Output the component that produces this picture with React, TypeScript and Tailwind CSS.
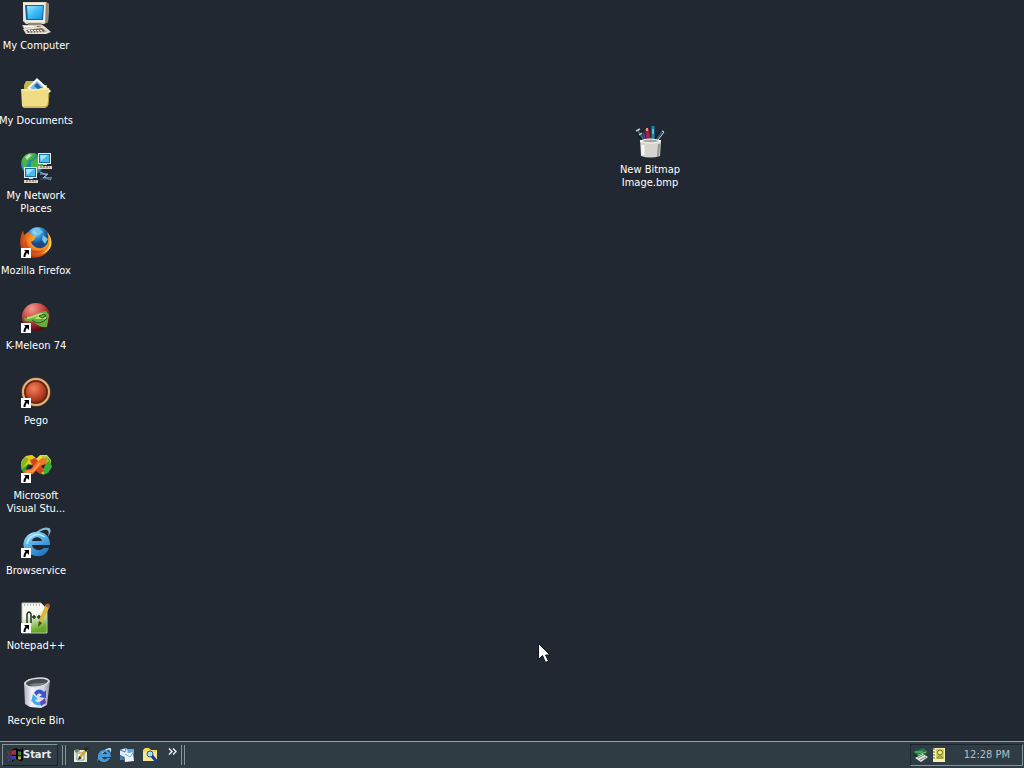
import React from "react";

type IconProps = { children: React.ReactNode; small?: boolean };

function Glyph({ children, small }: IconProps) {
  return (
    <svg
      aria-hidden="true"
      viewBox={small ? "0 0 16 16" : "0 0 32 32"}
      className={small ? "size-4 shrink-0" : "size-8 shrink-0"}
    >
      {children}
    </svg>
  );
}

function ShortcutArrow() {
  return (
    <g>
      <rect x="1" y="21" width="10" height="10" fill="#fff" />
      <path d="M4 23h5v5l-2-2c-1 1-1.500 2-1.500 4h-2c0-2.500.7-4 2-5.500z" fill="#000" />
    </g>
  );
}

function MyComputer() {
  return (
    <Glyph>
      <defs>
        <linearGradient id="screen" x2="1" y2="1">
          <stop stopColor="#9be8ff" />
          <stop offset=".5" stopColor="#3bbcf6" />
          <stop offset="1" stopColor="#1c8fe0" />
        </linearGradient>
      </defs>
      <path d="M3 0h23l3 2-1 18-4 2H6l-3-3z" fill="#ddd8c8" />
      <path d="M26 0l3 2-1 18-3 1z" fill="#8f8a7c" />
      <path d="M3 1h22v19H5z" fill="#f1eee4" />
      <path d="M5 3h19l-1 15H6z" fill="#1a5f9e" />
      <path d="M7 4h16l-1 13H8z" fill="url(#screen)" />
      <path d="M8 21h13l2 3H8z" fill="#8d8676" />
      <path d="M2 23h21l2 4H4z" fill="#d6d0c1" />
      <path d="M4 24h10v1H4z" fill="#fff" />
      <path d="M17 24h4v1h-4z" fill="#5d574c" />
      <path d="M3 27l21-3 7 6-5 2H6z" fill="#e6dfd0" />
      <path d="M6 28l16-2 5 4-19 1z" fill="#77695d" />
      <path d="M8 28.500h15M9 30h17" stroke="#f6f1e5" strokeDasharray="2 1" />
    </Glyph>
  );
}

function MyDocuments() {
  return (
    <Glyph>
      <path d="M4 8l2-4h8l3 4h10v8H4z" fill="#c3b545" />
      <path d="M7 11L17 1l14 13-6 6z" fill="#f8fbff" />
      <path d="M10 11l7-7 9 9-4 4z" fill="#78b9e5" />
      <path d="M14 9l3-3 5 5-4 1zM21 14l4-2 2 2-3 3z" fill="#28639b" />
      <path d="M1 12h18l2-1h8l-1 18-3 2H4l-2-2z" fill="#f1dc86" />
      <path d="M2 13h17l2-1h7" fill="none" stroke="#fff4ae" />
      <path d="M4 30h21l3-2 1-11" fill="none" stroke="#b79a38" />
    </Glyph>
  );
}

function MonitorShape({ x, y }: { x: number; y: number }) {
  return (
    <g transform={`translate(${x} ${y})`}>
      <path d="M0 0h13v11H0z" fill="#eeeade" />
      <path d="M1 1h11v9H1z" fill="#176eaa" />
      <path d="M2 2h9v7H2z" fill="#49b9ee" />
      <path d="M2 2h8L3 8z" fill="#a1e8ff" />
      <path d="M5 11h4v1H5zM0 13h14v3H0z" fill="#d8d3c5" />
      <path d="M2 14h10" stroke="#545b60" strokeDasharray="2 1" />
    </g>
  );
}

function NetworkPlaces() {
  return (
    <Glyph>
      <circle cx="12" cy="12" r="11" fill="#238ca5" />
      <path d="M2 8c3-7 9-8 14-6l-3 5-4 1-2 5-4 4zM11 10l8-6 4 9-8 7-4-4z" fill="#49b34a" />
      <path d="M5 5l4-3 3 1-5 5z" fill="#b8e7ad" />
      <MonitorShape x={18} y={1} />
      <MonitorShape x={4} y={15} />
      <path d="M20 22h8l-5 4h9M20 20l7 3-3 2 7 3" fill="none" stroke="#91b7dc" />
      <path d="M20 27h10" stroke="#315a83" />
    </Glyph>
  );
}

function Firefox() {
  return (
    <Glyph>
      <defs>
        <radialGradient id="fox" cx=".65" cy=".35" r=".7">
          <stop stopColor="#ffd24d" />
          <stop offset=".55" stopColor="#f28220" />
          <stop offset="1" stopColor="#b62f12" />
        </radialGradient>
        <radialGradient id="globe" cx=".4" cy=".2">
          <stop stopColor="#c9f4ff" />
          <stop offset=".5" stopColor="#3599da" />
          <stop offset="1" stopColor="#164883" />
        </radialGradient>
      </defs>
      <circle cx="18" cy="12" r="12" fill="url(#globe)" />
      <path d="M12 2l6-1 5 4-4 3-3-2zM23 8l5 4-3 5-3-4z" fill="#75c6e9" />
      <path d="M3 3l1 5 4-3 4 3 4 1-2 4-3 2c2 5 8 8 13 5 5-3 5-8 3-15 5 5 5 13 1 19-7 9-21 9-26 0C-1 17 0 9 3 3z" fill="url(#fox)" />
      <path d="M6 13c0 9 8 13 18 10-8 6-18 3-20-7z" fill="#d24a1b" />
      <path d="M28 6c4 9 1 17-7 21 10-2 14-11 7-21z" fill="#ffd04e" />
      <ShortcutArrow />
    </Glyph>
  );
}

function KMeleon() {
  return (
    <Glyph>
      <defs>
        <radialGradient id="meleon" cx=".35" cy=".2" r=".8">
          <stop stopColor="#f09a8d" />
          <stop offset=".5" stopColor="#c84642" />
          <stop offset="1" stopColor="#5a0710" />
        </radialGradient>
      </defs>
      <circle cx="16" cy="15" r="14" fill="url(#meleon)" />
      <path d="M4 16c7 1 12-6 22-7l3 4-2 12c-6 1-10-2-13-5l-9-1z" fill="#68ad3b" />
      <path d="M7 16c7 0 9-4 15-4l-5 4h9" fill="none" stroke="#b4de6c" strokeWidth="2" />
      <path d="M12 18c5 4 10 4 15-2M19 14l5-2 2 2-4 2z" fill="none" stroke="#1d5723" />
      <ShortcutArrow />
    </Glyph>
  );
}

function Pego() {
  return (
    <Glyph>
      <defs>
        <radialGradient id="pego" cx=".4" cy=".35" r=".7">
          <stop stopColor="#f28160" />
          <stop offset=".55" stopColor="#c4482a" />
          <stop offset="1" stopColor="#7c2613" />
        </radialGradient>
      </defs>
      <circle cx="16" cy="15" r="14.500" fill="#96562c" />
      <circle cx="16" cy="15" r="13" fill="none" stroke="#dcb67a" strokeWidth="2" />
      <circle cx="16" cy="15" r="11" fill="url(#pego)" stroke="#64220f" strokeWidth="1.500" />
      <ShortcutArrow />
    </Glyph>
  );
}

function VisualStudio() {
  return (
    <Glyph>
      <path d="M1 10l5-6 6-1 4 3-5 6-3 1-2 4 3 5H4l-3-5z" fill="#2aa33a" />
      <path d="M6 4l6-1 5 4-5 6-4-1-5 4-2-2 1-6z" fill="#ecc91f" />
      <path d="M1 11l4-6 4 2-4 6-3 5z" fill="#7fb829" />
      <path d="M16 7l4-4h7l4 5v7l-4-3-4-1-4 1z" fill="#f0d432" />
      <path d="M26 4l4 4 2 7-4 6-5 2-4-4 5-3 2-5z" fill="#3bae37" />
      <path d="M22 4l5 1 2 4-4 3z" fill="#92ca38" />
      <path d="M18 18l5-2 1 6-4-1z" fill="#e4cf2d" />
      <path d="M10 8l5-2 5 5 4 8-4 3-6-5z" fill="#d3441c" />
      <path d="M5 18l6-1 6-7 5-4 5 1-1 5-6 2-7 8-6 1-3-2z" fill="#f07428" />
      <path d="M7 20l6-1 7-8" fill="none" stroke="#f99c52" strokeWidth="1.500" />
      <ShortcutArrow />
    </Glyph>
  );
}

function Browservice() {
  return (
    <Glyph>
      <defs>
        <linearGradient id="ie" x2=".6" y2="1">
          <stop stopColor="#c5efff" />
          <stop offset=".4" stopColor="#62b9ec" />
          <stop offset="1" stopColor="#2079c4" />
        </linearGradient>
      </defs>
      <path d="M4 24C9 8 22-2 29 1c3 2 1 6-1 9 1-4 1-6-1-7C21 1 9 12 4 24z" fill="#8bb9cf" />
      <path d="M30 18H12c1 5 8 7 12 3h5c-3 8-10 10-17 7C5 26 2 20 4 14 8 2 25 2 29 12c1 2 1 4 1 6zM12 14h10c-1-5-9-5-10 0z" fill="url(#ie)" fillRule="evenodd" />
      <path d="M7 17c2-9 11-12 18-7" fill="none" stroke="#b9ebff" strokeWidth="1.500" />
      <ShortcutArrow />
    </Glyph>
  );
}

function Notepad() {
  return (
    <Glyph>
      <defs>
        <linearGradient id="note" x2=".3" y2="1">
          <stop offset=".45" stopColor="#fafbf4" />
          <stop offset="1" stopColor="#65aa22" />
        </linearGradient>
      </defs>
      <path d="M2 1h19l6 6v24H2z" fill="url(#note)" stroke="#b7c1ad" />
      <path d="M4 3h17" stroke="#5e746b" strokeDasharray="1 2" />
      <path d="M7 21v-9q2-4 4 0v9" fill="none" stroke="#202f28" strokeWidth="1.500" />
      <path d="M12 15h4m-2-2v4M17 15h4m-2-2v4" stroke="#25352a" strokeWidth="1.500" />
      <path d="M26 2l4 2-8 16-4 4 1-6z" fill="#e3b535" />
      <path d="M28 1l2 2-1 3-4-2z" fill="#a45e35" />
      <path d="M19 19l3 2-4 4z" fill="#37452e" />
      <ShortcutArrow />
    </Glyph>
  );
}

function RecycleBin() {
  return (
    <Glyph>
      <defs>
        <linearGradient id="bin">
          <stop stopColor="#b0b1c0" />
          <stop offset=".3" stopColor="#f4f3fa" />
          <stop offset=".75" stopColor="#d6d4e2" />
          <stop offset="1" stopColor="#8b8d9e" />
        </linearGradient>
      </defs>
      <path d="M4 6l5-4 16-1 5 3-3 24-6 3-11-1-5-3z" fill="url(#bin)" />
      <path d="M5 6c3-5 21-7 24-2-3 6-23 9-24 2z" fill="#444b51" stroke="#dddfe4" strokeWidth="1.500" />
      <path d="M9 8c6-3 13-1 17-3-3 4-11 5-17 3z" fill="#7c8387" />
      <path d="M14 16c3-5 8-4 10-1l2-2v8l-7-1 3-2c-3-2-4-2-5 1z" fill="#3856c9" />
      <path d="M13 17l5 5-3 1c2 3 4 2 7 1l-1 4c-4 1-7 0-9-4l-1 1z" fill="#41aee8" />
      <path d="M20 25l5-4 1 5-5 3z" fill="#6945bd" />
    </Glyph>
  );
}

function BitmapCup() {
  return (
    <Glyph>
      <path d="M12 17L3 4" stroke="#101820" strokeWidth="4" />
      <path d="M12 17L4 5" stroke="#4a5d78" strokeWidth="2" />
      <path d="M2 5l4-2M5 9l3-2" stroke="#b9cede" strokeWidth="1.500" />
      <path d="M12 16L9 7" stroke="#3349b0" strokeWidth="2" />
      <path d="M15 17L13 3" stroke="#a9223d" strokeWidth="4" />
      <path d="M13 5V2" stroke="#eb927d" strokeWidth="2" />
      <path d="M19 16V0" stroke="#198aab" strokeWidth="3" />
      <path d="M19 8V3" stroke="#bddde2" />
      <path d="M21 16l8-12" stroke="#101820" strokeWidth="4" />
      <path d="M21 16l8-12" stroke="#24577a" strokeWidth="2" />
      <path d="M28 5l2 1-6 8" stroke="#dde1dd" fill="none" />
      <path d="M6 14h21l-1 16q-10 3-19 0z" fill="#d5d4cf" />
      <path d="M6 15q10-4 21 0-10 4-21 0z" fill="#a5a49f" stroke="#fff" />
      <path d="M9 19v10" stroke="#f8f8ef" strokeWidth="3" />
      <path d="M25 18l-1 12" stroke="#96928e" strokeWidth="2" />
    </Glyph>
  );
}

function WindowsLogo() {
  return (
    <Glyph small>
      <path d="M5 3q3-3 6-1t5-1v12q-3 2-5 0t-6 2z" fill="#050707" />
      <path d="M5 4q2-2 4-1v5q-2-1-4 0z" fill="#a3303f" />
      <path d="M11 4q2 1 3 0v4q-1 1-3 0z" fill="#3b8138" />
      <path d="M5 9q2-1 4 0v4q-2-1-4 0z" fill="#3a42ac" />
      <path d="M11 9q2 1 3 0v3q-1 1-3 0z" fill="#b8ad35" />
      <path d="M0 5h5M1 7h4" stroke="#8d3041" strokeWidth="1.500" strokeDasharray="2 1" />
      <path d="M0 10h5M1 13h4" stroke="#423b98" strokeWidth="2" strokeDasharray="2 1" />
    </Glyph>
  );
}

function DesktopNote() {
  return (
    <Glyph small>
      <path d="M1 3h13v12H1z" fill="#e9ead5" />
      <path d="M1 3l4-1 2 2-4 2z" fill="#728c65" />
      <path d="M4 6h7v7H4z" fill="#fff" stroke="#78977e" />
      <path d="M6 11l1-3 6-7 2 2-6 7z" fill="#d4a834" />
      <path d="M6 9l3 2-4 2zM11 2l2-2 3 1-3 4z" fill="#1b2a2a" />
    </Glyph>
  );
}

function SmallExplorer() {
  return (
    <Glyph small>
      <path d="M1 15C3 6 10 0 15 1q1 3-1 5 0-3-1-3C9 3 4 8 1 15z" fill="#add8ea" />
      <path d="M15 10H6c1 3 4 3 5 1h3c-2 5-8 5-11 2C0 8 4 3 8 3c4 0 7 3 7 7zM6 7h5C10 4 6 4 6 7z" fill="#459bd8" fillRule="evenodd" />
    </Glyph>
  );
}

function SmallMail() {
  return (
    <Glyph small>
      <path d="M1 3l6-2 3 3-5 6-4-2z" fill="#dceafa" />
      <path d="M1 3l5 2 1-4" fill="none" stroke="#4a86bf" />
      <path d="M5 6l9-1 1 9-9 1z" fill="#eef4ff" />
      <path d="M6 7l5 3 3-4" fill="none" stroke="#7aa5cf" />
      <path d="M8 2h7v5l-2-2-4 1z" fill="#5eaee4" />
      <path d="M1 8v5h5l-2-3z" fill="#3a7fc5" />
    </Glyph>
  );
}

function SmallSearch() {
  return (
    <Glyph small>
      <path d="M1 3l2-2h4l2 2h6v11H1z" fill="#f4d75d" />
      <path d="M1 5h14v9H1z" fill="#f3e594" />
      <circle cx="8" cy="7" r="3" fill="#a9deef" stroke="#31588a" />
      <path d="M10 9l5 6" stroke="#183897" strokeWidth="3" />
    </Glyph>
  );
}

function SafeRemove() {
  return (
    <Glyph small>
      <path d="M0 5l10-4 5 4-9 5z" fill="#1f7c42" />
      <path d="M2 5h8M5 8l8-3" stroke="#7bc37c" />
      <path d="M0 5l6 5v2L0 8z" fill="#0b3d22" />
      <path d="M2 11l8-4 5 3-7 5z" fill="#e1e7dd" />
      <path d="M5 11l6-3M7 13l6-3" stroke="#74847b" />
    </Glyph>
  );
}

function TrayContact() {
  return (
    <Glyph small>
      <path d="M2 1h12v14H2z" fill="#f3efb8" />
      <path d="M2 2h2M2 5h2M2 8h2M2 11h2" stroke="#68641c" />
      <path d="M5 2h8v10H5z" fill="#d3d056" />
      <circle cx="9" cy="5.500" r="2.500" fill="#f2ec80" stroke="#6b6b20" />
      <path d="M6 11q3-4 6 0z" fill="#eeeab5" stroke="#77772c" />
    </Glyph>
  );
}

const shortcuts = [
  { lines: ["My Computer"], Icon: MyComputer },
  { lines: ["My Documents"], Icon: MyDocuments },
  { lines: ["My Network", "Places"], Icon: NetworkPlaces },
  { lines: ["Mozilla Firefox"], Icon: Firefox },
  { lines: ["K-Meleon 74"], Icon: KMeleon },
  { lines: ["Pego"], Icon: Pego },
  { lines: ["Microsoft", "Visual Stu..."], Icon: VisualStudio },
  { lines: ["Browservice"], Icon: Browservice },
  { lines: ["Notepad++"], Icon: Notepad },
  { lines: ["Recycle Bin"], Icon: RecycleBin },
];

const launchers = [
  { label: "Show Desktop", Icon: DesktopNote },
  { label: "Internet Explorer", Icon: SmallExplorer },
  { label: "Outlook Express", Icon: SmallMail },
  { label: "Search", Icon: SmallSearch },
];

function DesktopIcon({ lines, Icon }: { lines: string[]; Icon: React.ComponentType }) {
  return (
    <button type="button" className="flex h-[62px] w-[72px] flex-col items-center gap-[5px] text-center leading-[13px] text-white">
      <Icon />
      <span className="whitespace-pre">{lines.join("\n")}</span>
    </button>
  );
}

function Grip() {
  return (
    <div className="flex h-5 gap-[2px]">
      <span className="w-px bg-[#87949a]" />
      <span className="w-px bg-[#87949a]" />
    </div>
  );
}

export default function App() {
  return (
    <div className="flex min-h-screen cursor-default flex-col overflow-x-hidden bg-[#222831] font-['DejaVu_Sans_Condensed','DejaVu_Sans',sans-serif] text-[11px]">
      <main className="relative flex-1">
        <nav aria-label="Desktop" className="flex flex-col gap-[13px] pt-[2px]">
          {shortcuts.map((item) => (
            <DesktopIcon key={item.lines[0]} {...item} />
          ))}
        </nav>
        <div className="absolute top-[126px] left-[614px]">
          <DesktopIcon lines={["New Bitmap", "Image.bmp"]} Icon={BitmapCup} />
        </div>
        <svg aria-hidden="true" viewBox="0 0 12 20" className="absolute top-[643px] left-[538px] h-5 w-3">
          <path d="M.5.5v16l4-4 3 7 3-1.500-3-6h4.500z" fill="#fff" stroke="#111820" />
        </svg>
      </main>

      <footer className="flex h-[27px] items-center border-t border-[#98a3a5] bg-[#303c44] pr-px pl-[2px] text-[#e6ebec]">
        <button type="button" className="flex h-[22px] w-14 items-center border border-t-[#85939a] border-r-[#192127] border-b-[#192127] border-l-[#85939a] pl-1 font-bold">
          <WindowsLogo />
          <span>Start</span>
        </button>
        <div className="flex items-center pl-1">
          <Grip />
          <div className="flex gap-[7px] pl-[7px]">
            {launchers.map(({ label, Icon }) => (
              <button key={label} type="button" aria-label={label}>
                <Icon />
              </button>
            ))}
          </div>
          <button type="button" aria-label="More" className="mb-2 ml-[10px]">
            <svg aria-hidden="true" viewBox="0 0 9 7" className="h-[7px] w-[9px]">
              <path d="M1 .5l3 3-3 3M5 .5l3 3-3 3" fill="none" stroke="#e8eded" strokeWidth="1.500" />
            </svg>
          </button>
          <div className="pl-1">
            <Grip />
          </div>
        </div>
        <div className="ml-auto flex h-[22px] w-[113px] items-center gap-[2px] border border-t-[#1b242a] border-r-[#85939a] border-b-[#85939a] border-l-[#1b242a] pr-3 pl-[2px]">
          <SafeRemove />
          <TrayContact />
          <time className="ml-auto pt-px whitespace-nowrap text-[#b5bfc3]">12:28 PM</time>
        </div>
      </footer>
    </div>
  );
}
